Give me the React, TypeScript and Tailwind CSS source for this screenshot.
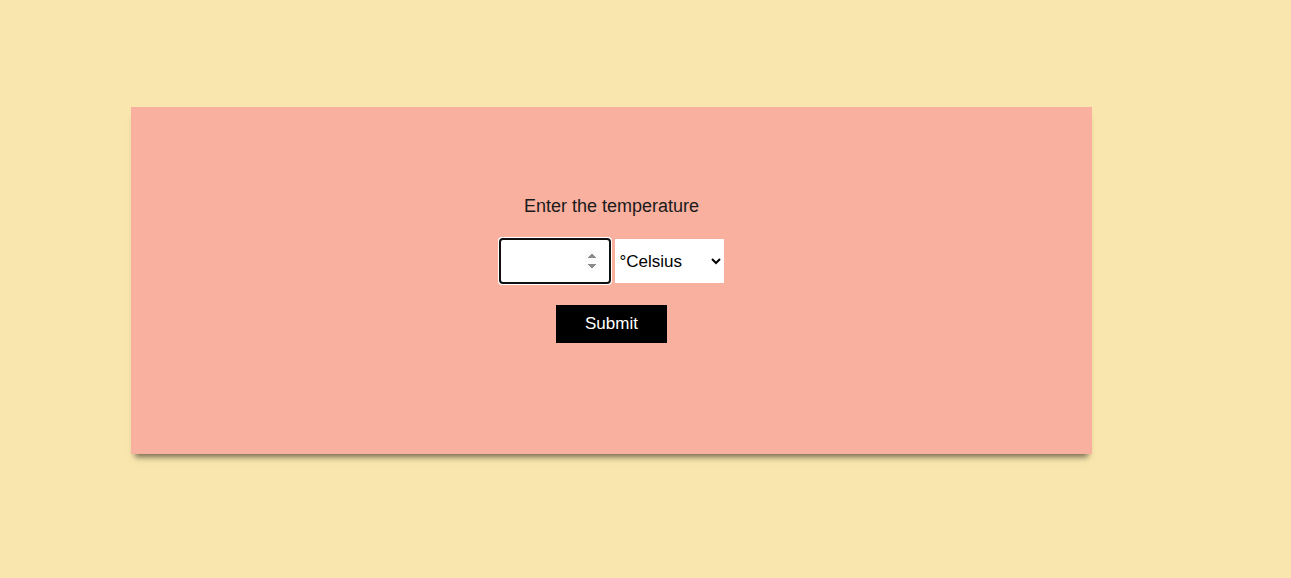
export default function App() {
  return (
    <div
      className="min-h-[578px] w-full bg-[#f9e6ae] pt-[107px] pl-[131px]"
      style={{ fontFamily: '"Liberation Sans", Arial, sans-serif' }}
    >
      <div className="flex h-[347px] w-[961px] flex-col items-center bg-[#f9b09f] pt-[85px] shadow-[0_7px_6px_-4px_rgba(0,0,0,0.55)]">
        <p className="h-[28px] text-[18px] leading-[28px] text-[#1a1a1a]">
          Enter the temperature
        </p>
        <div className="mt-[19px] flex items-center gap-[5px]">
          <input
            type="number"
            autoFocus
            className="h-[44px] w-[110px] rounded-[3px] bg-white px-[10px] text-[17px] text-black caret-black"
          />
          <select className="h-[44px] w-[109px] bg-white pl-[1px] pr-[4px] text-[17px] text-black">
            <option>°Celsius</option>
            <option>°Fahrenheit</option>
            <option>Kelvin</option>
          </select>
        </div>
        <button className="mt-[22px] h-[38px] w-[111px] bg-black text-[17px] text-white">
          Submit
        </button>
      </div>
    </div>
  );
}
